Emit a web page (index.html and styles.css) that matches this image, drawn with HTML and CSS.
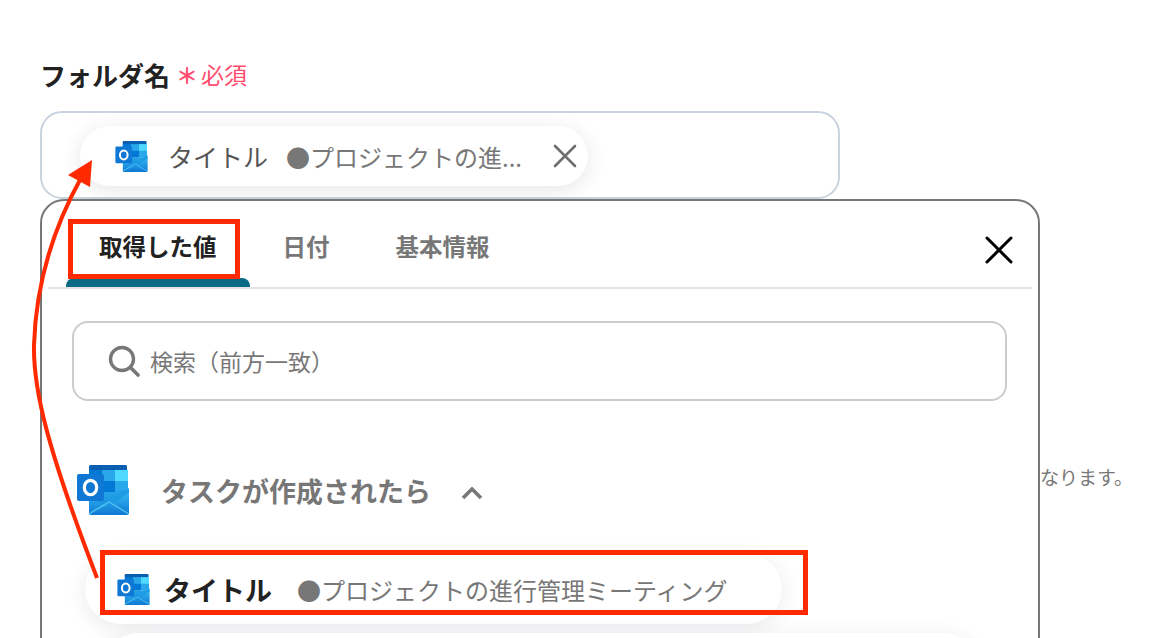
FILE: index.html
```html
<!DOCTYPE html>
<html lang="ja">
<head>
    <meta charset="UTF-8">
    <meta name="viewport" content="width=device-width, initial-scale=1.0">
    <title>フォルダ名</title>
    <link rel="stylesheet" href="styles.css">
</head>
<body>

    <svg class="icon-defs" width="0" height="0" aria-hidden="true">
        <defs>
            <linearGradient id="env" x1="0" y1="0" x2="0" y2="1">
                <stop offset="0" stop-color="#35b8f1"/>
                <stop offset="1" stop-color="#0f78d4"/>
            </linearGradient>
            <symbol id="outlook" viewBox="0 0 52 50">
                <rect x="12" y="0" width="38" height="26" rx="2" fill="#0364b8"/>
                <rect x="12" y="0" width="38" height="5" rx="2" fill="#0a5fb0"/>
                <rect x="12" y="5" width="13" height="11" fill="#0078d4"/>
                <rect x="25" y="5" width="13" height="11" fill="#28a8ea"/>
                <rect x="38" y="5" width="13" height="11" fill="#50d9ff"/>
                <rect x="25" y="16" width="13" height="11" fill="#0078d4"/>
                <rect x="38" y="16" width="13" height="11" fill="#28a8ea"/>
                <rect x="12" y="16" width="13" height="20" fill="#0364b8"/>
                <path d="M12 27h40v21a2 2 0 0 1-2 2H14a2 2 0 0 1-2-2z" fill="url(#env)"/>
                <path d="M12 48 L52 23 V28 L31 40 Z" fill="#28a8ea"/>
                <path d="M12 32 L31 41 L52 28 V25 L38 27 H12 Z" fill="#1490df" opacity=".55"/>
                <path d="M12 49 L32 37 L52 49" fill="none" stroke="#50c0f0" stroke-width="1.4"/>
                <rect x="0" y="9" width="27" height="27" rx="2" fill="#0f78d4"/>
                <ellipse cx="13.5" cy="22.5" rx="6.2" ry="7.2" fill="none" stroke="#fff" stroke-width="3.2"/>
            </symbol>
        </defs>
    </svg>

    <div class="page">
        <div class="field-label">
            <span class="label-text">フォルダ名</span>
            <span class="required-mark">＊</span>
            <span class="required-text">必須</span>
        </div>

        <div class="field">
            <div class="chip">
                <svg class="chip-icon"><use href="#outlook"/></svg>
                <span class="chip-title">タイトル</span>
                <span class="chip-value">●プロジェクトの進...</span>
                <svg class="chip-close" viewBox="0 0 24 24">
                    <path d="M2 2 22 22M22 2 2 22" fill="none" stroke="#6f6f6f" stroke-width="2.6" stroke-linecap="round"/>
                </svg>
            </div>
        </div>

        <p class="hint">なります。</p>

        <div class="modal">
            <div class="tab-container">
                <div class="tab-button active"><span class="tab-name">取得した値</span><span class="tab-bar"></span></div>
                <div class="tab-button"><span class="tab-name">日付</span><span class="tab-bar"></span></div>
                <div class="tab-button"><span class="tab-name">基本情報</span><span class="tab-bar"></span></div>
                <svg class="modal-close" viewBox="0 0 28 28">
                    <path d="M2 2 26 26M26 2 2 26" fill="none" stroke="#000" stroke-width="3" stroke-linecap="round"/>
                </svg>
            </div>

            <div class="search-box">
                <svg class="search-icon" viewBox="0 0 32 32">
                    <circle cx="14" cy="14" r="11.5" fill="none" stroke="#777" stroke-width="3.4"/>
                    <path d="M23 23 30 30" fill="none" stroke="#777" stroke-width="3.6" stroke-linecap="round"/>
                </svg>
                <span class="search-text">検索（前方一致）</span>
            </div>

            <div class="section-head">
                <svg class="section-icon"><use href="#outlook"/></svg>
                <span class="section-title">タスクが作成されたら</span>
                <svg class="section-arrow" viewBox="0 0 22 14">
                    <path d="M2 12 11 3 20 12" fill="none" stroke="#777" stroke-width="3.6"/>
                </svg>
            </div>

            <div class="value-row">
                <svg class="value-icon"><use href="#outlook"/></svg>
                <span class="value-title">タイトル</span>
                <span class="value-text">●プロジェクトの進行管理ミーティング</span>
            </div>
            <div class="value-row next"></div>
        </div>

        <div class="red-box tab-mark"></div>
        <div class="red-box row-mark"></div>

        <svg class="arrow" viewBox="0 0 1150 638">
            <path d="M97 578C48 450 33 390 34 345C36 280 55 225 81 178" fill="none" stroke="#ff2a00" stroke-width="4"/>
            <path d="M92 160 68 175 90 187Z" fill="#ff2a00"/>
        </svg>
    </div>

</body>
</html>
```

FILE: styles.css
```css
html, body {
    margin: 0;
    padding: 0;
    background-color: #fff;
}
body {
    font-family: "Noto Sans CJK JP", "Noto Sans", sans-serif;
    color: #222;
}
.icon-defs {
    display: block;
    height: 0;
}
.page {
    position: relative;
    width: 1150px;
    height: 638px;
    overflow: hidden;
    padding: 55px 0 0 40px;
    box-sizing: border-box;
}
.field-label {
    display: flex;
    align-items: center;
    height: 38px;
    margin-bottom: 18px;
}
.label-text {
    font-size: 26px;
    font-weight: 700;
    color: #222;
}
.required-mark {
    width: 24px;
    margin-left: 5px;
    font-size: 22px;
    font-weight: 700;
    color: #ff4d6d;
    text-align: center;
}
.required-text {
    margin-left: 2px;
    font-size: 23px;
    color: #ff4d6d;
}
.field {
    display: flex;
    align-items: flex-start;
    width: 800px;
    height: 88px;
    padding: 13px 0 0 38px;
    box-sizing: border-box;
    border: 2px solid #c9d3de;
    border-radius: 22px;
}
.chip {
    display: flex;
    align-items: center;
    width: 508px;
    height: 60px;
    padding-left: 35px;
    box-sizing: border-box;
    background-color: #fff;
    border-radius: 30px;
    box-shadow: 0 4px 20px rgba(40, 50, 70, 0.12);
}
.chip-icon {
    flex: none;
    width: 33px;
    height: 31px;
}
.chip-title {
    margin-left: 20px;
    font-size: 25px;
    color: #555;
}
.chip-value {
    margin-left: 18px;
    font-size: 24px;
    color: #777;
    white-space: nowrap;
}
.chip-close {
    flex: none;
    width: 24px;
    height: 24px;
    margin-left: 31px;
}
.hint {
    margin: 264px 0 0;
    padding-left: 1000px;
    font-size: 19px;
    color: #777;
    white-space: nowrap;
}
.modal {
    position: absolute;
    left: 40px;
    top: 199px;
    width: 1000px;
    height: 520px;
    box-sizing: border-box;
    background-color: #fff;
    border: 2px solid #777;
    border-radius: 24px;
}
.tab-container {
    display: flex;
    align-items: flex-end;
    height: 88px;
    margin: 0 6px 0 6px;
    padding-left: 18px;
    border-bottom: 2px solid #e3e3e3;
    box-sizing: border-box;
}
.tab-button {
    display: flex;
    flex-direction: column;
    align-items: center;
    height: 86px;
    padding: 0 33px;
    position: relative;
}
.tab-name {
    margin-top: 27px;
    font-size: 23.5px;
    line-height: 36px;
    font-weight: 700;
    color: #777;
    white-space: nowrap;
}
.tab-button.active .tab-name {
    color: #222;
}
.tab-bar {
    margin-top: auto;
    align-self: stretch;
    height: 9px;
    margin-left: -33px;
    margin-right: -33px;
    border-radius: 8px 8px 0 0;
}
.tab-button.active .tab-bar {
    background-color: #0b6b84;
}
.modal-close {
    align-self: flex-start;
    width: 28px;
    height: 28px;
    margin: 35px 19px 0 auto;
}
.search-box {
    display: flex;
    align-items: center;
    width: 935px;
    height: 80px;
    margin: 32px 0 0 30px;
    padding-left: 34px;
    box-sizing: border-box;
    border: 2px solid #ccc;
    border-radius: 16px;
}
.search-icon {
    width: 32px;
    height: 32px;
}
.search-text {
    margin-left: 10px;
    font-size: 23px;
    color: #777;
}
.section-head {
    display: flex;
    align-items: center;
    height: 50px;
    margin: 64px 0 0 35px;
}
.section-icon {
    flex: none;
    width: 52px;
    height: 50px;
}
.section-title {
    margin-left: 32px;
    font-size: 27px;
    font-weight: 700;
    color: #777;
}
.section-arrow {
    width: 22px;
    height: 14px;
    margin-left: 30px;
    margin-top: 6px;
}
.value-row {
    display: flex;
    align-items: center;
    width: 697px;
    height: 70px;
    margin: 39px 0 0 43px;
    padding-left: 32px;
    box-sizing: border-box;
    background-color: #fff;
    border-radius: 35px;
    box-shadow: 0 4px 20px rgba(40, 50, 70, 0.1);
}
.value-row.next {
    width: 875px;
    margin: 9px 0 0 62px;
}
.value-icon {
    flex: none;
    width: 33px;
    height: 31px;
}
.value-title {
    margin-left: 14px;
    font-size: 27px;
    font-weight: 700;
    color: #222;
}
.value-text {
    margin-left: 25px;
    font-size: 24px;
    color: #777;
    white-space: nowrap;
}
.red-box {
    position: absolute;
    box-sizing: border-box;
    border: 5px solid #ff2a00;
}
.tab-mark {
    left: 68px;
    top: 219px;
    width: 172px;
    height: 60px;
}
.row-mark {
    left: 100px;
    top: 550px;
    width: 708px;
    height: 65px;
}
.arrow {
    position: absolute;
    left: 0;
    top: 0;
    width: 1150px;
    height: 638px;
    pointer-events: none;
}
```
